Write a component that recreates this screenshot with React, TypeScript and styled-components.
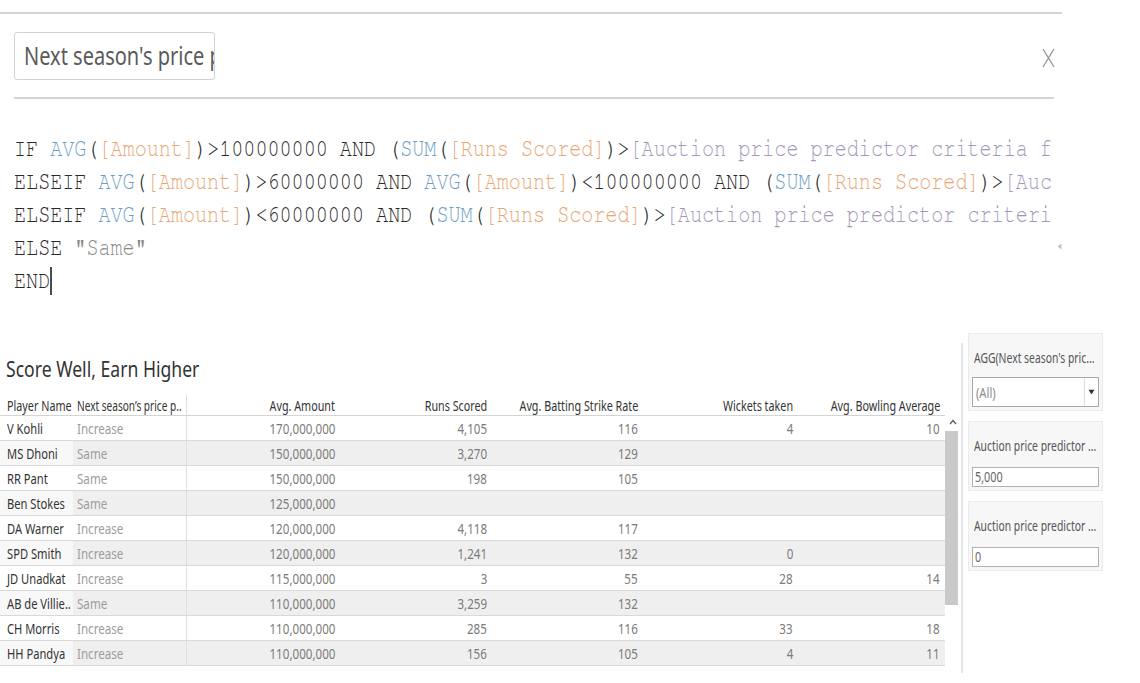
import React from "react";
import styled, { createGlobalStyle } from "styled-components";

const SANS = `"Noto Sans", "DejaVu Sans", "Liberation Sans", sans-serif`;
const MONO = `"Nimbus Mono PS", "FreeMono", "Courier New", "Liberation Mono", monospace`;

const Global = createGlobalStyle`
  html, body { margin: 0; padding: 0; background: #fff; }
  body { font-family: ${SANS}; color: #333; }
  * { box-sizing: border-box; }
`;

const Page = styled.div`
  width: 1140px;
  height: 683px;
  overflow: hidden;
  background: #fff;
`;

/* Narrow-looking text: the source UI font is condensed */
const Squeeze = styled.span<{ $end?: boolean; $k?: number }>`
  display: inline-block;
  white-space: nowrap;
  transform: scaleX(${(p) => p.$k ?? 0.8});
  transform-origin: ${(p) => (p.$end ? "right" : "left")} center;
`;

const Rule = styled.div<{ $top: number; $left: number; $width: number }>`
  margin-top: ${(p) => p.$top}px;
  margin-left: ${(p) => p.$left}px;
  width: ${(p) => p.$width}px;
  height: 2px;
  background: #d4d4d4;
`;

const CalcHeader = styled.div`
  display: flex;
  align-items: center;
  justify-content: space-between;
  margin: 18px 0 0 14px;
  width: 1041px;
  height: 48px;
`;

const NameBox = styled.div`
  width: 201px;
  height: 48px;
  border: 1px solid #d2d2d2;
  border-radius: 3px;
  padding: 0 0 0 9px;
  font-size: 25px;
  line-height: 45px;
  color: #5a5a5a;
  white-space: nowrap;
  overflow: hidden;
`;

const CloseIcon = styled.svg`
  display: block;
  margin-top: 4px;
`;

const CodeArea = styled.div`
  position: relative;
  height: 198px;
  padding-top: 33px;
  margin-bottom: 36px;
`;

const CodeViewport = styled.div`
  margin-left: 14px;
  width: 1042px;
  overflow: hidden;
`;

const CodeText = styled.div`
  font-family: ${MONO};
  font-size: 25px;
  line-height: 33px;
  white-space: pre;
  width: max-content;
  transform: scaleX(0.8045);
  transform-origin: 0 0;
`;

const CodeLine = styled.div`
  height: 33px;
`;

const tokenColors: Record<string, string> = {
  k: "#2a2a2a",
  f: "#6f9dc4",
  d: "#e8a673",
  p: "#a297ba",
  s: "#8a8a8a",
};

const Tok = styled.span<{ $t: string }>`
  color: ${(p) => tokenColors[p.$t]};
`;

const Caret = styled.span`
  display: inline-block;
  width: 0;
  height: 28px;
  border-left: 2px solid #222;
  vertical-align: -7px;
`;

const ScrollHint = styled.svg`
  position: absolute;
  left: 1057px;
  top: 144px;
`;

const VizArea = styled.div`
  display: flex;
  height: 350px;
`;

const Sheet = styled.div`
  width: 961px;
  padding-top: 21px;
`;

const Title = styled.div`
  margin-left: 6px;
  font-size: 22px;
  line-height: 28px;
  color: #333;
  white-space: nowrap;
`;

const Table = styled.div`
  margin-top: 13px;
`;

const HeaderRow = styled.div`
  display: flex;
  width: 945px;
  height: 21px;
  border-bottom: 1px solid #d4d4d4;
`;

const Cell = styled.div<{ $w: number; $right?: boolean; $pl?: number; $div?: boolean }>`
  width: ${(p) => p.$w}px;
  flex: none;
  display: flex;
  align-items: center;
  justify-content: ${(p) => (p.$right ? "flex-end" : "flex-start")};
  padding-left: ${(p) => p.$pl ?? 0}px;
  padding-right: ${(p) => (p.$right ? 5 : 0)}px;
  border-right: ${(p) => (p.$div ? "1px solid #dedede" : "none")};
  white-space: nowrap;
  overflow: hidden;
`;

const HeadText = styled(Squeeze)`
  font-size: 14px;
  color: #333;
`;

const BodyWrap = styled.div`
  display: flex;
`;

const Rows = styled.div`
  width: 945px;
`;

const Row = styled.div<{ $band: boolean }>`
  display: flex;
  height: 25px;
  border-bottom: 1px solid #d9d9d9;
  background: ${(p) => (p.$band ? "#efefef" : "#fff")};
`;

const NameCell = styled(Cell)<{ $band: boolean }>`
  background: ${(p) => (p.$band ? "#f8f8f8" : "#fff")};
`;

const NameText = styled(Squeeze)`
  font-size: 14.5px;
  color: #333;
`;

const TagText = styled(Squeeze)`
  font-size: 14.5px;
  color: #9c9c9c;
`;

const NumText = styled(Squeeze)`
  font-size: 14.5px;
  color: #7a7a7a;
`;

const ScrollBar = styled.div`
  width: 15px;
  display: flex;
  flex-direction: column;
  align-items: flex-start;
  padding-top: 3px;
`;

const ScrollArrow = styled.svg`
  display: block;
  margin-left: 4px;
`;

const ScrollThumb = styled.div`
  margin-top: 6px;
  width: 13px;
  height: 174px;
  background: #c9c9c9;
`;

const SideDivider = styled.div`
  width: 2px;
  margin-top: 10px;
  height: 330px;
  background: #e6e6e6;
`;

const SidePanel = styled.div`
  margin-left: 5px;
  width: 135px;
  display: flex;
  flex-direction: column;
  gap: 10px;
`;

const FilterCard = styled.div`
  background: #f7f7f7;
  border: 1px solid #ebebeb;
  padding: 13px 3px 3px 3px;
`;

const CardTitle = styled.div`
  font-size: 14.5px;
  line-height: 20px;
  color: #555;
  white-space: nowrap;
  overflow: hidden;
  padding-left: 2px;
`;

const Dropdown = styled.div`
  margin-top: 10px;
  height: 30px;
  border: 1px solid #a9a9a9;
  background: #fff;
  display: flex;
  align-items: center;
`;

const DropValue = styled.div`
  flex: 1;
  padding-left: 3px;
  font-size: 14px;
  color: #8a8a8a;
  overflow: hidden;
`;

const DropButton = styled.div`
  width: 14px;
  height: 100%;
  border-left: 1px solid #dcdcdc;
  display: flex;
  align-items: center;
  justify-content: center;
`;

const ParamInput = styled.div`
  margin-top: 12px;
  height: 20px;
  border: 1px solid #b2b2b2;
  background: #fff;
  padding-left: 2px;
  font-size: 13.5px;
  line-height: 18px;
  color: #666;
  overflow: hidden;
`;

type Tk = [string, string];
const codeLines: Tk[][] = [
  [
    ["k", "IF "], ["f", "AVG"], ["k", "("], ["d", "[Amount]"], ["k", ")>100000000 AND ("],
    ["f", "SUM"], ["k", "("], ["d", "[Runs Scored]"], ["k", ")>"], ["p", "[Auction price predictor criteria f"],
  ],
  [
    ["k", "ELSEIF "], ["f", "AVG"], ["k", "("], ["d", "[Amount]"], ["k", ")>60000000 AND "],
    ["f", "AVG"], ["k", "("], ["d", "[Amount]"], ["k", ")<100000000 AND ("], ["f", "SUM"], ["k", "("],
    ["d", "[Runs Scored]"], ["k", ")>"], ["p", "[Auc"],
  ],
  [
    ["k", "ELSEIF "], ["f", "AVG"], ["k", "("], ["d", "[Amount]"], ["k", ")<60000000 AND ("],
    ["f", "SUM"], ["k", "("], ["d", "[Runs Scored]"], ["k", ")>"], ["p", "[Auction price predictor criteri"],
  ],
  [["k", "ELSE "], ["s", '"Same"']],
  [["k", "END"]],
];

type Col = { key: string; w: number; right?: boolean; pl?: number; div?: boolean; k?: number };
const cols: Col[] = [
  { key: "Player Name", w: 73, pl: 7, k: 0.77 },
  { key: "Next season\u2019s price p..", w: 114, pl: 4, div: true, k: 0.72 },
  { key: "Avg. Amount", w: 153, right: true, k: 0.77 },
  { key: "Runs Scored", w: 152, right: true, k: 0.77 },
  { key: "Avg. Batting Strike Rate", w: 151, right: true, k: 0.77 },
  { key: "Wickets taken", w: 155, right: true, k: 0.77 },
  { key: "Avg. Bowling Average", w: 147, right: true, k: 0.77 },
];

const rows: string[][] = [
  ["V Kohli", "Increase", "170,000,000", "4,105", "116", "4", "10"],
  ["MS Dhoni", "Same", "150,000,000", "3,270", "129", "", ""],
  ["RR Pant", "Same", "150,000,000", "198", "105", "", ""],
  ["Ben Stokes", "Same", "125,000,000", "", "", "", ""],
  ["DA Warner", "Increase", "120,000,000", "4,118", "117", "", ""],
  ["SPD Smith", "Increase", "120,000,000", "1,241", "132", "0", ""],
  ["JD Unadkat", "Increase", "115,000,000", "3", "55", "28", "14"],
  ["AB de Villie..", "Same", "110,000,000", "3,259", "132", "", ""],
  ["CH Morris", "Increase", "110,000,000", "285", "116", "33", "18"],
  ["HH Pandya", "Increase", "110,000,000", "156", "105", "4", "11"],
];

export default function App() {
  return (
    <Page>
      <Global />
      <Rule $top={12} $left={0} $width={1062} />
      <CalcHeader>
        <NameBox>
          <Squeeze>Next season's price predictor</Squeeze>
        </NameBox>
        <CloseIcon width="13" height="20" viewBox="0 0 13 20">
          <path d="M1 1 L12 19 M12 1 L1 19" stroke="#9a9a9a" strokeWidth="1.4" fill="none" />
        </CloseIcon>
      </CalcHeader>
      <Rule $top={17} $left={14} $width={1040} />
      <CodeArea>
        <CodeViewport>
          <CodeText>
            {codeLines.map((line, i) => (
              <CodeLine key={i}>
                {line.map(([t, s], j) => (
                  <Tok key={j} $t={t}>{s}</Tok>
                ))}
                {i === codeLines.length - 1 && <Caret />}
              </CodeLine>
            ))}
          </CodeText>
        </CodeViewport>
        <ScrollHint width="5" height="7" viewBox="0 0 5 7">
          <path d="M4.5 0.5 L0.5 3.5 L4.5 6.5 Z" fill="#c4c4c4" />
        </ScrollHint>
      </CodeArea>
      <VizArea>
        <Sheet>
          <Title>
            <Squeeze>Score Well, Earn Higher</Squeeze>
          </Title>
          <Table>
            <HeaderRow>
              {cols.map((c) => (
                <Cell key={c.key} $w={c.w} $right={c.right} $pl={c.pl} $div={c.div}>
                  <HeadText $end={c.right} $k={c.k}>{c.key}</HeadText>
                </Cell>
              ))}
            </HeaderRow>
            <BodyWrap>
              <Rows>
                {rows.map((r, i) => {
                  const band = i % 2 === 1;
                  return (
                    <Row key={r[0]} $band={band}>
                      <NameCell $w={cols[0].w} $pl={cols[0].pl} $band={band}>
                        <NameText $k={0.77}>{r[0]}</NameText>
                      </NameCell>
                      <Cell $w={cols[1].w} $pl={cols[1].pl} $div>
                        <TagText>{r[1]}</TagText>
                      </Cell>
                      {r.slice(2).map((v, j) => (
                        <Cell key={j} $w={cols[j + 2].w} $right>
                          <NumText $end>{v}</NumText>
                        </Cell>
                      ))}
                    </Row>
                  );
                })}
              </Rows>
              <ScrollBar>
                <ScrollArrow width="8" height="6" viewBox="0 0 8 6">
                  <path d="M1 5 L4 1.5 L7 5" stroke="#555" strokeWidth="1.2" fill="none" />
                </ScrollArrow>
                <ScrollThumb />
              </ScrollBar>
            </BodyWrap>
          </Table>
        </Sheet>
        <SideDivider />
        <SidePanel>
          <FilterCard>
            <CardTitle>
              <Squeeze $k={0.715}>AGG(Next season's pric...</Squeeze>
            </CardTitle>
            <Dropdown>
              <DropValue>
                <Squeeze>(All)</Squeeze>
              </DropValue>
              <DropButton>
                <svg width="7" height="6" viewBox="0 0 7 6">
                  <path d="M0.5 0.8 L6.5 0.8 L3.5 5.5 Z" fill="#333" />
                </svg>
              </DropButton>
            </Dropdown>
          </FilterCard>
          <FilterCard>
            <CardTitle>
              <Squeeze $k={0.715}>Auction price predictor ...</Squeeze>
            </CardTitle>
            <ParamInput>
              <Squeeze>5,000</Squeeze>
            </ParamInput>
          </FilterCard>
          <FilterCard>
            <CardTitle>
              <Squeeze $k={0.715}>Auction price predictor ...</Squeeze>
            </CardTitle>
            <ParamInput>
              <Squeeze>0</Squeeze>
            </ParamInput>
          </FilterCard>
        </SidePanel>
      </VizArea>
    </Page>
  );
}
